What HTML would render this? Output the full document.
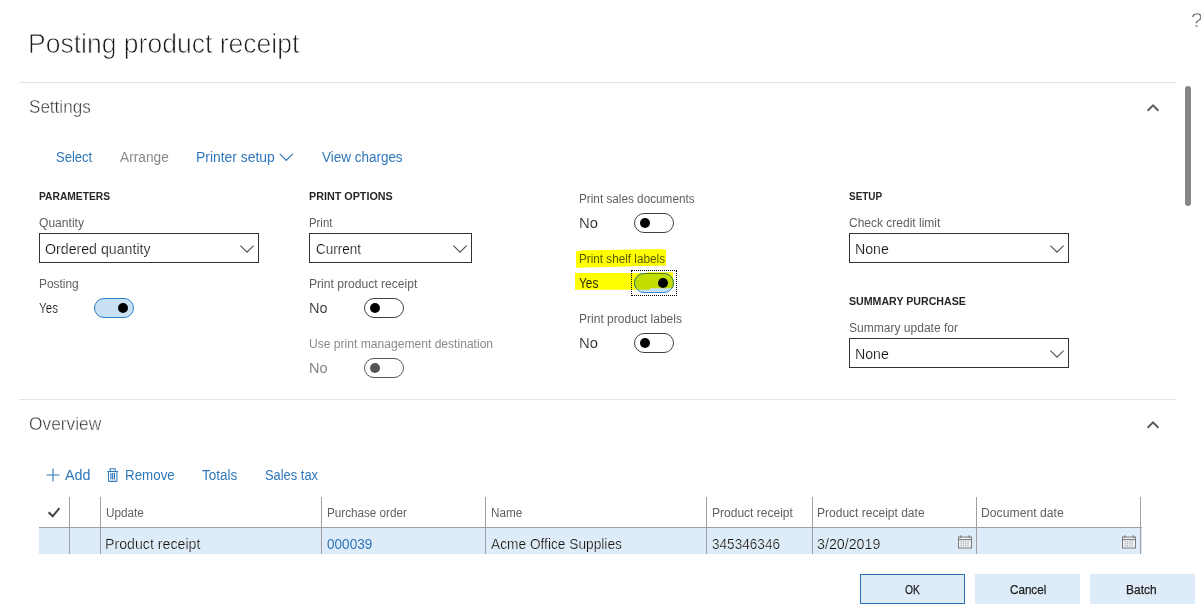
<!DOCTYPE html>
<html><head><meta charset="utf-8"><title>Posting product receipt</title>
<style>
html,body{margin:0;padding:0;background:#fff;width:1201px;height:613px;overflow:hidden}
body{font-family:"Liberation Sans",sans-serif;position:relative}
#root{position:absolute;left:0;top:0;width:1201px;height:613px;will-change:transform;transform:translateZ(0)}
.t{position:absolute;white-space:nowrap;transform-origin:0 50%}
</style></head><body><div id="root">
<div style="position:absolute;left:19px;top:82px;width:1157px;height:1px;background:#e3e3e3"></div>
<div style="position:absolute;left:19px;top:399px;width:1157px;height:1px;background:#e3e3e3"></div>
<div style="position:absolute;left:1185px;top:86px;width:6px;height:120px;border-radius:3px;background:#858585"></div>
<svg style="position:absolute;left:1146px;top:102.5px" width="14" height="9" viewBox="0 0 14 9"><path d="M1.6 7.7 L7 2.3 L12.4 7.7" fill="none" stroke="#5c5c5c" stroke-width="2"/></svg>
<svg style="position:absolute;left:1146px;top:419.5px" width="14" height="9" viewBox="0 0 14 9"><path d="M1.6 7.7 L7 2.3 L12.4 7.7" fill="none" stroke="#5c5c5c" stroke-width="2"/></svg>
<svg style="position:absolute;left:279.4px;top:153px" width="15" height="9" viewBox="0 0 15 9"><path d="M0.8 0.8 L7.3 7.3 L13.8 0.8" fill="none" stroke="#2e77ba" stroke-width="1.2"/></svg>
<svg style="position:absolute;left:570px;top:244px" width="120" height="56" viewBox="570 244 120 56"><polygon points="576,251.5 583,250.3 607,250 620,249.8 635,249.4 660,249 666,249.8 666,265.6 635,266.2 620,266.8 607,267 585,267.5 576,267.8" fill="#ffff00"/><polygon points="575,273 647,273 647,272.2 673,272.2 673,288.2 650,288.2 650,289.8 575,289.8" fill="#ffff00"/></svg>
<div style="position:absolute;left:39px;top:233px;width:218px;height:28px;border:1px solid #333;background:#fff"></div><svg style="position:absolute;left:239.6px;top:245px" width="14" height="8.5" viewBox="0 0 14 8.5"><path d="M0.4 0.6 L7 7.2 L13.6 0.6" fill="none" stroke="#4e4e4e" stroke-width="1.05"/></svg>
<div style="position:absolute;left:309px;top:233px;width:161px;height:28px;border:1px solid #333;background:#fff"></div><svg style="position:absolute;left:452.6px;top:245px" width="14" height="8.5" viewBox="0 0 14 8.5"><path d="M0.4 0.6 L7 7.2 L13.6 0.6" fill="none" stroke="#4e4e4e" stroke-width="1.05"/></svg>
<div style="position:absolute;left:849px;top:233px;width:218px;height:28px;border:1px solid #333;background:#fff"></div><svg style="position:absolute;left:1049.6px;top:245px" width="14" height="8.5" viewBox="0 0 14 8.5"><path d="M0.4 0.6 L7 7.2 L13.6 0.6" fill="none" stroke="#4e4e4e" stroke-width="1.05"/></svg>
<div style="position:absolute;left:849px;top:338px;width:218px;height:28px;border:1px solid #333;background:#fff"></div><svg style="position:absolute;left:1049.6px;top:350px" width="14" height="8.5" viewBox="0 0 14 8.5"><path d="M0.4 0.6 L7 7.2 L13.6 0.6" fill="none" stroke="#4e4e4e" stroke-width="1.05"/></svg>
<div style="position:absolute;left:94px;top:298px;width:38px;height:18px;border:1px solid #2a7dc8;border-radius:10px;background:#c7e0f4"></div><div style="position:absolute;left:118px;top:303px;width:10px;height:10px;border-radius:5px;background:#000"></div>
<div style="position:absolute;left:364px;top:298px;width:38px;height:18px;border:1px solid #404040;border-radius:10px;background:#fff"></div><div style="position:absolute;left:370px;top:303px;width:10px;height:10px;border-radius:5px;background:#000"></div>
<div style="position:absolute;left:364px;top:358px;width:38px;height:18px;border:1px solid #555;border-radius:10px;background:#fff"></div><div style="position:absolute;left:370px;top:363px;width:10px;height:10px;border-radius:5px;background:#555"></div>
<div style="position:absolute;left:634px;top:213px;width:38px;height:18px;border:1px solid #404040;border-radius:10px;background:#fff"></div><div style="position:absolute;left:640px;top:218px;width:10px;height:10px;border-radius:5px;background:#000"></div>
<div style="position:absolute;left:634px;top:333px;width:38px;height:18px;border:1px solid #404040;border-radius:10px;background:#fff"></div><div style="position:absolute;left:640px;top:338px;width:10px;height:10px;border-radius:5px;background:#000"></div>
<div style="position:absolute;left:634px;top:273px;width:38px;height:18px;border:1px solid #2b88d8;border-radius:10px;background:#c7e0f4;overflow:hidden"><div style="position:absolute;left:-1px;top:-1px;width:40px;height:16.8px;background:#c3dc00;clip-path:polygon(0 0,100% 0,100% 90.5%,40% 90.5%,40% 100%,0 100%)"></div></div>
<div style="position:absolute;left:634px;top:273px;width:38px;height:18px;border:1px solid #4f8a10;border-radius:10px;clip-path:inset(0 0 4.5px 0)"></div>
<div style="position:absolute;left:658px;top:278px;width:10px;height:10px;border-radius:5px;background:#000"></div>
<div style="position:absolute;left:631px;top:270px;width:44px;height:23.5px;border:1px dotted #000"></div>
<div style="position:absolute;left:39px;top:528px;width:1103px;height:26px;background:#deecf9"></div>
<div style="position:absolute;left:39px;top:527px;width:1103px;height:1px;background:#a0a0a0"></div>
<div style="position:absolute;left:69px;top:497px;width:1px;height:57px;background:#a0a0a0"></div>
<div style="position:absolute;left:100px;top:497px;width:1px;height:57px;background:#a0a0a0"></div>
<div style="position:absolute;left:321px;top:497px;width:1px;height:57px;background:#a0a0a0"></div>
<div style="position:absolute;left:485px;top:497px;width:1px;height:57px;background:#a0a0a0"></div>
<div style="position:absolute;left:706px;top:497px;width:1px;height:57px;background:#a0a0a0"></div>
<div style="position:absolute;left:812px;top:497px;width:1px;height:57px;background:#a0a0a0"></div>
<div style="position:absolute;left:976px;top:497px;width:1px;height:57px;background:#a0a0a0"></div>
<div style="position:absolute;left:1140px;top:497px;width:1px;height:57px;background:#a0a0a0"></div>
<svg style="position:absolute;left:47px;top:506px" width="14" height="13" viewBox="0 0 14 13"><path d="M1.6 6.2 L5.7 10.3 L12.4 2.2" fill="none" stroke="#484340" stroke-width="2.1"/></svg>
<svg style="position:absolute;left:46px;top:468px" width="14" height="14" viewBox="0 0 14 14"><path d="M7 0.5 V13.5 M0.5 7 H13.5" fill="none" stroke="#2e77ba" stroke-width="1.1"/></svg>
<svg style="position:absolute;left:107.2px;top:468px" width="11.4" height="14" viewBox="0 0 11.4 14"><path d="M0.3 3.4 H11.1 M3.2 3.2 V0.8 H8.2 V3.2 M1.5 3.4 V12.4 Q1.5 13.4 2.5 13.4 H8.9 Q9.9 13.4 9.9 12.4 V3.4" fill="none" stroke="#2e77ba" stroke-width="1.05"/><path d="M3.9 5 V11.6 M5.7 5 V11.6 M7.5 5 V11.6" fill="none" stroke="#2e77ba" stroke-width="1.15"/></svg>
<svg style="position:absolute;left:958px;top:534.7px" width="14" height="14" viewBox="0 0 14 14"><rect x="0.5" y="2" width="13" height="11" fill="#eef2f6" stroke="#7a7a7a" stroke-width="1"/><path d="M0.5 4.6 H13.5" stroke="#7a7a7a" stroke-width="1.1"/><path d="M2.8 0.3 V3 M11.2 0.3 V3" stroke="#7a7a7a" stroke-width="1.1"/><path d="M2.6 6.8 H11.8 M2.6 8.8 H11.8 M2.6 10.8 H11.8" stroke="#9a9aa0" stroke-width="1" stroke-dasharray="1.2 1.1"/></svg>
<svg style="position:absolute;left:1122px;top:534.7px" width="14" height="14" viewBox="0 0 14 14"><rect x="0.5" y="2" width="13" height="11" fill="#eef2f6" stroke="#7a7a7a" stroke-width="1"/><path d="M0.5 4.6 H13.5" stroke="#7a7a7a" stroke-width="1.1"/><path d="M2.8 0.3 V3 M11.2 0.3 V3" stroke="#7a7a7a" stroke-width="1.1"/><path d="M2.6 6.8 H11.8 M2.6 8.8 H11.8 M2.6 10.8 H11.8" stroke="#9a9aa0" stroke-width="1" stroke-dasharray="1.2 1.1"/></svg>
<div style="position:absolute;left:860px;top:574px;width:103px;height:28px;border:1px solid #2b6fb3;background:#deecf9"></div>
<div style="position:absolute;left:975px;top:574px;width:105px;height:30px;background:#deecf9"></div>
<div style="position:absolute;left:1090px;top:574px;width:105px;height:30px;background:#deecf9"></div>
<div class="t" style="left:28.24px;top:29.0px;font-size:27px;line-height:30px;height:30px;color:#1c1c1c;font-weight:400;transform:scaleX(0.9823);-webkit-text-stroke:0.75px #fff">Posting product receipt</div>
<div class="t" style="left:1190.70px;top:8.0px;font-size:20.5px;line-height:23px;height:23px;color:#6a6a6a;font-weight:400;transform:scaleX(1.0273);-webkit-text-stroke:0.3px #fff">?</div>
<div class="t" style="left:28.60px;top:97.0px;font-size:17.5px;line-height:20px;height:20px;color:#303030;font-weight:400;transform:scaleX(0.9751);-webkit-text-stroke:0.4px #fff">Settings</div>
<div class="t" style="left:56.00px;top:149.0px;font-size:14px;line-height:16px;height:16px;color:#2e77ba;font-weight:400;transform:scaleX(0.9303)">Select</div>
<div class="t" style="left:120.00px;top:149.0px;font-size:14px;line-height:16px;height:16px;color:#8a8a8a;font-weight:400;transform:scaleX(0.9796)">Arrange</div>
<div class="t" style="left:196.01px;top:149.0px;font-size:14px;line-height:16px;height:16px;color:#2e77ba;font-weight:400;transform:scaleX(0.9925)">Printer setup</div>
<div class="t" style="left:321.70px;top:149.0px;font-size:14px;line-height:16px;height:16px;color:#2e77ba;font-weight:400;transform:scaleX(0.9620)">View charges</div>
<div class="t" style="left:39.00px;top:190.0px;font-size:10.5px;line-height:12px;height:12px;color:#262626;font-weight:700;transform:scaleX(0.9763)">PARAMETERS</div>
<div class="t" style="left:309.00px;top:190.0px;font-size:10.5px;line-height:12px;height:12px;color:#262626;font-weight:700;transform:scaleX(1.0249)">PRINT OPTIONS</div>
<div class="t" style="left:849.00px;top:190.0px;font-size:10.5px;line-height:12px;height:12px;color:#262626;font-weight:700;transform:scaleX(0.9485)">SETUP</div>
<div class="t" style="left:849.00px;top:295.0px;font-size:10.5px;line-height:12px;height:12px;color:#262626;font-weight:700;transform:scaleX(1.0113)">SUMMARY PURCHASE</div>
<div class="t" style="left:39.30px;top:216.0px;font-size:12px;line-height:14px;height:14px;color:#5f5f5f;font-weight:400;transform:scaleX(1.0069)">Quantity</div>
<div class="t" style="left:309.30px;top:216.0px;font-size:12px;line-height:14px;height:14px;color:#5f5f5f;font-weight:400;transform:scaleX(0.9471)">Print</div>
<div class="t" style="left:849.00px;top:216.0px;font-size:12px;line-height:14px;height:14px;color:#5f5f5f;font-weight:400;transform:scaleX(0.9998)">Check credit limit</div>
<div class="t" style="left:849.00px;top:321.0px;font-size:12px;line-height:14px;height:14px;color:#5f5f5f;font-weight:400;transform:scaleX(1.0026)">Summary update for</div>
<div class="t" style="left:45.30px;top:241.0px;font-size:14px;line-height:16px;height:16px;color:#101010;font-weight:400;transform:scaleX(1.0126);-webkit-text-stroke:0.2px #fff">Ordered quantity</div>
<div class="t" style="left:316.00px;top:241.0px;font-size:14px;line-height:16px;height:16px;color:#101010;font-weight:400;transform:scaleX(0.9617);-webkit-text-stroke:0.2px #fff">Current</div>
<div class="t" style="left:854.99px;top:241.0px;font-size:14px;line-height:16px;height:16px;color:#101010;font-weight:400;transform:scaleX(1.0097);-webkit-text-stroke:0.2px #fff">None</div>
<div class="t" style="left:854.99px;top:346.0px;font-size:14px;line-height:16px;height:16px;color:#101010;font-weight:400;transform:scaleX(1.0097);-webkit-text-stroke:0.2px #fff">None</div>
<div class="t" style="left:39.30px;top:277.0px;font-size:12px;line-height:14px;height:14px;color:#5f5f5f;font-weight:400;transform:scaleX(0.9911)">Posting</div>
<div class="t" style="left:39.30px;top:300.0px;font-size:14px;line-height:16px;height:16px;color:#101010;font-weight:400;transform:scaleX(0.8319);-webkit-text-stroke:0.2px #fff">Yes</div>
<div class="t" style="left:309.30px;top:277.0px;font-size:12px;line-height:14px;height:14px;color:#5f5f5f;font-weight:400;transform:scaleX(1.0088)">Print product receipt</div>
<div class="t" style="left:308.67px;top:300.0px;font-size:14px;line-height:16px;height:16px;color:#101010;font-weight:400;transform:scaleX(1.0345);-webkit-text-stroke:0.2px #fff">No</div>
<div class="t" style="left:309.30px;top:337.0px;font-size:12px;line-height:14px;height:14px;color:#898989;font-weight:400;transform:scaleX(1.0072)">Use print management destination</div>
<div class="t" style="left:308.67px;top:360.0px;font-size:14px;line-height:16px;height:16px;color:#858585;font-weight:400;transform:scaleX(1.0345)">No</div>
<div class="t" style="left:578.70px;top:192.0px;font-size:12px;line-height:14px;height:14px;color:#5f5f5f;font-weight:400;transform:scaleX(0.9792)">Print sales documents</div>
<div class="t" style="left:578.64px;top:215.0px;font-size:14px;line-height:16px;height:16px;color:#101010;font-weight:400;transform:scaleX(1.0578);-webkit-text-stroke:0.2px #fff">No</div>
<div class="t" style="left:579.30px;top:252.0px;font-size:12px;line-height:14px;height:14px;color:#5a5a00;font-weight:400;transform:scaleX(0.9768)">Print shelf labels</div>
<div class="t" style="left:579.10px;top:275.0px;font-size:14px;line-height:16px;height:16px;color:#2a2a00;font-weight:400;transform:scaleX(0.8451)">Yes</div>
<div class="t" style="left:579.30px;top:312.0px;font-size:12px;line-height:14px;height:14px;color:#5f5f5f;font-weight:400;transform:scaleX(1.0027)">Print product labels</div>
<div class="t" style="left:578.64px;top:335.0px;font-size:14px;line-height:16px;height:16px;color:#101010;font-weight:400;transform:scaleX(1.0578);-webkit-text-stroke:0.2px #fff">No</div>
<div class="t" style="left:29.00px;top:414.0px;font-size:17.5px;line-height:20px;height:20px;color:#303030;font-weight:400;transform:scaleX(0.9905);-webkit-text-stroke:0.4px #fff">Overview</div>
<div class="t" style="left:65.30px;top:467.0px;font-size:14px;line-height:16px;height:16px;color:#2e77ba;font-weight:400;transform:scaleX(1.0239)">Add</div>
<div class="t" style="left:125.05px;top:467.0px;font-size:14px;line-height:16px;height:16px;color:#2e77ba;font-weight:400;transform:scaleX(0.9543)">Remove</div>
<div class="t" style="left:202.00px;top:467.0px;font-size:14px;line-height:16px;height:16px;color:#2e77ba;font-weight:400;transform:scaleX(0.9652)">Totals</div>
<div class="t" style="left:265.00px;top:467.0px;font-size:14px;line-height:16px;height:16px;color:#2e77ba;font-weight:400;transform:scaleX(0.9204)">Sales tax</div>
<div class="t" style="left:106.20px;top:506.0px;font-size:12px;line-height:14px;height:14px;color:#5f5f5f;font-weight:400;transform:scaleX(0.9789)">Update</div>
<div class="t" style="left:326.80px;top:506.0px;font-size:12px;line-height:14px;height:14px;color:#5f5f5f;font-weight:400;transform:scaleX(0.9738)">Purchase order</div>
<div class="t" style="left:490.80px;top:506.0px;font-size:12px;line-height:14px;height:14px;color:#5f5f5f;font-weight:400;transform:scaleX(0.9741)">Name</div>
<div class="t" style="left:711.80px;top:506.0px;font-size:12px;line-height:14px;height:14px;color:#5f5f5f;font-weight:400;transform:scaleX(1.0016)">Product receipt</div>
<div class="t" style="left:817.40px;top:506.0px;font-size:12px;line-height:14px;height:14px;color:#5f5f5f;font-weight:400;transform:scaleX(1.0016)">Product receipt date</div>
<div class="t" style="left:981.10px;top:506.0px;font-size:12px;line-height:14px;height:14px;color:#5f5f5f;font-weight:400;transform:scaleX(1.0170)">Document date</div>
<div class="t" style="left:104.79px;top:536.0px;font-size:14px;line-height:16px;height:16px;color:#101010;font-weight:400;transform:scaleX(1.0132);-webkit-text-stroke:0.2px #fff">Product receipt</div>
<div class="t" style="left:326.80px;top:536.0px;font-size:14px;line-height:16px;height:16px;color:#2e77ba;font-weight:400;transform:scaleX(0.9695)">000039</div>
<div class="t" style="left:490.80px;top:536.0px;font-size:14px;line-height:16px;height:16px;color:#101010;font-weight:400;transform:scaleX(0.9799);-webkit-text-stroke:0.2px #fff">Acme Office Supplies</div>
<div class="t" style="left:711.80px;top:536.0px;font-size:14px;line-height:16px;height:16px;color:#101010;font-weight:400;transform:scaleX(0.9703);-webkit-text-stroke:0.2px #fff">345346346</div>
<div class="t" style="left:817.40px;top:536.0px;font-size:14px;line-height:16px;height:16px;color:#101010;font-weight:400;transform:scaleX(1.0177);-webkit-text-stroke:0.2px #fff">3/20/2019</div>
<div class="t" style="left:904.90px;top:583.0px;font-size:12.6px;line-height:14px;height:14px;color:#222;font-weight:400;transform:scaleX(0.8140);-webkit-text-stroke:0.25px #222">OK</div>
<div class="t" style="left:1009.70px;top:583.0px;font-size:12.6px;line-height:14px;height:14px;color:#222;font-weight:400;transform:scaleX(0.9244);-webkit-text-stroke:0.25px #222">Cancel</div>
<div class="t" style="left:1126.35px;top:583.0px;font-size:12.6px;line-height:14px;height:14px;color:#222;font-weight:400;transform:scaleX(0.9519);-webkit-text-stroke:0.25px #222">Batch</div>
</div></body></html>
